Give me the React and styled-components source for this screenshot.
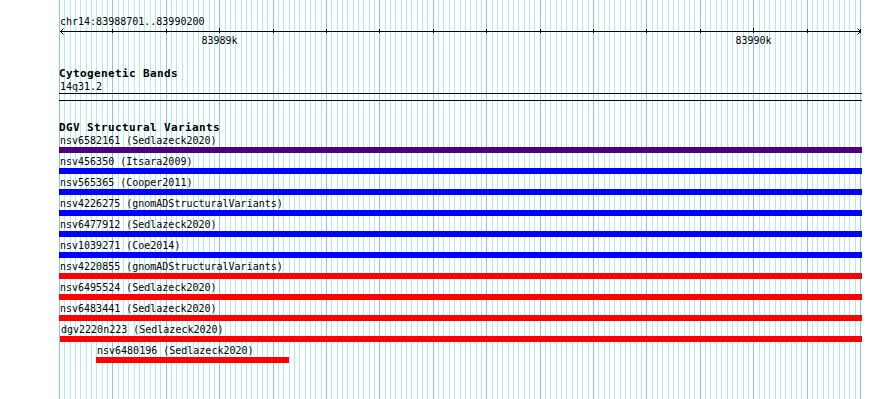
import React from "react";
import styled, { createGlobalStyle } from "styled-components";

const MINOR = "#afeeee";
const MAJOR = "#87c4f0";
const PANEL_WIDTH = 803;
const PX_PER_STEP = 801 / 150; // one step is 10 bp

const GlobalStyle = createGlobalStyle`
  html, body {
    margin: 0;
    padding: 0;
    background: #fff;
  }
  body {
    font-family: "DejaVu Sans Mono", "Liberation Mono", monospace;
    color: #000;
  }
`;

// grid lines every 10bp, darker every 100bp
const gridLines = Array.from({ length: 151 }, (_, i) => ({
    x: Math.round(i * PX_PER_STEP),
    major: i % 10 === 0
}));
const gridImage = gridLines
    .map(l => {
        const c = l.major ? MAJOR : MINOR;
        return `linear-gradient(${c}, ${c})`;
    })
    .join(", ");
const gridPos = gridLines.map(l => `${l.x}px 0`).join(", ");

const Page = styled.div`
  display: flex;
  width: 890px;
  height: 399px;
  overflow: hidden;
  padding-left: 59px;
  box-sizing: border-box;
`;

const Panel = styled.div`
  width: ${PANEL_WIDTH}px;
  height: 399px;
  padding-top: 15px;
  box-sizing: border-box;
  display: flex;
  flex-direction: column;
  background-image: ${gridImage};
  background-position: ${gridPos};
  background-size: 1px 100%;
  background-repeat: no-repeat;
`;

const Label = styled.div`
  font-size: 10px;
  line-height: 13px;
  height: 13px;
  padding-left: ${p => p.$indent || 1}px;
  white-space: nowrap;
`;

const TrackTitle = styled.div`
  font-size: 11px;
  font-weight: bold;
  letter-spacing: 0.38px;
  line-height: 13px;
  height: 13px;
  margin-top: ${p => p.$gap}px;
  white-space: nowrap;
`;

const AxisSvg = styled.svg`
  display: block;
  width: ${PANEL_WIDTH}px;
  height: 20px;
  overflow: visible;
`;

const Band = styled.div`
  height: 8px;
  box-sizing: border-box;
  border-top: 1px solid #000;
  border-bottom: 1px solid #000;
`;

const Row = styled.div`
  display: flex;
  flex-direction: column;
  height: 21px;
`;

const Bar = styled.div`
  height: 6px;
  margin-left: ${p => p.$start}px;
  width: ${p => p.$width}px;
  background: ${p => p.$color};
`;

const PURPLE = "#4b0082";
const BLUE = "#0000ff";
const RED = "#ff0000";

const variants = [
    { name: "nsv6582161 (Sedlazeck2020)", color: PURPLE },
    { name: "nsv456350 (Itsara2009)", color: BLUE },
    { name: "nsv565365 (Cooper2011)", color: BLUE },
    { name: "nsv4226275 (gnomADStructuralVariants)", color: BLUE },
    { name: "nsv6477912 (Sedlazeck2020)", color: BLUE },
    { name: "nsv1039271 (Coe2014)", color: BLUE },
    { name: "nsv4220855 (gnomADStructuralVariants)", color: RED },
    { name: "nsv6495524 (Sedlazeck2020)", color: RED },
    { name: "nsv6483441 (Sedlazeck2020)", color: RED },
    { name: "dgv2220n223 (Sedlazeck2020)", color: RED, start: 1 },
    { name: "nsv6480196 (Sedlazeck2020)", color: RED, start: 37, width: 193 }
];

function Axis() {
    const y = 3.5;
    const ticks = Array.from({ length: 16 }, (_, i) => Math.round(i * PX_PER_STEP * 10) + 0.5);
    return (
        <AxisSvg viewBox={`0 0 ${PANEL_WIDTH} 20`}>
            <g stroke="#000" strokeWidth="1" fill="none" shapeRendering="crispEdges">
                <line x1="1" y1={y} x2="802" y2={y} />
                {ticks.slice(1).map((x, i) => {
                    const big = (i + 1) % 10 === 3 || (i + 1) === 13;
                    return <line key={x} x1={x} y1={big ? 0 : 1} x2={x} y2="5" />;
                })}
            </g>
            <g stroke="#000" strokeWidth="1" fill="none">
                <polyline points="4.5,0.5 1.5,3.5 4.5,6.5" />
                <polyline points="798.5,0.5 801.5,3.5 798.5,6.5" />
            </g>
            <g fontFamily="'DejaVu Sans Mono', 'Liberation Mono', monospace" fontSize="10" textAnchor="middle" fill="#000">
                <text x={ticks[3]} y="15.5">83989k</text>
                <text x={ticks[13]} y="15.5">83990k</text>
            </g>
        </AxisSvg>
    );
}

export default function App() {
    return (
        <>
            <GlobalStyle />
            <Page>
                <Panel>
                    <Label>chr14:83988701..83990200</Label>
                    <Axis />
                    <TrackTitle $gap={19}>Cytogenetic Bands</TrackTitle>
                    <Label>14q31.2</Label>
                    <Band />
                    <TrackTitle $gap={20}>DGV Structural Variants</TrackTitle>
                    {variants.map(v => (
                        <Row key={v.name}>
                            <Label $indent={(v.start || 0) + 1}>{v.name}</Label>
                            <Bar
                                $color={v.color}
                                $start={v.start || 0}
                                $width={v.width || PANEL_WIDTH - (v.start || 0)}
                            />
                        </Row>
                    ))}
                </Panel>
            </Page>
        </>
    );
}
